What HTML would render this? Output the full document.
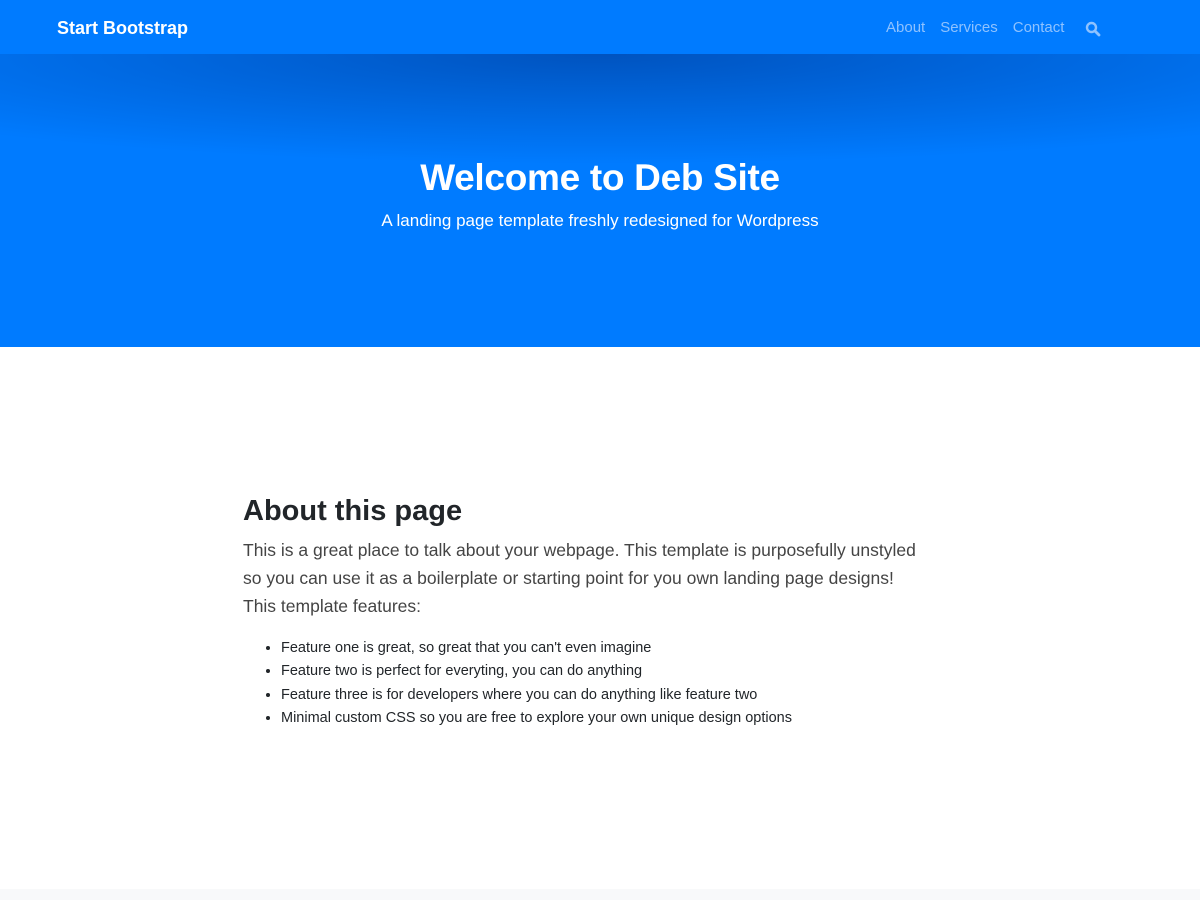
<!DOCTYPE html>
<html><head><style>
*{margin:0;padding:0;box-sizing:border-box}
body{width:1200px;height:900px;overflow:hidden;font-family:"Liberation Sans",sans-serif;background:#fff;position:relative}
nav{height:54px;background:#007bff;position:relative}
.brand{position:absolute;left:57px;top:18px;color:#fff;font-size:18px;font-weight:bold}
.links{position:absolute;left:886px;top:19px;color:#8ec2ff;font-size:15px;display:flex;gap:15px}
.hero{height:293px;background:radial-gradient(ellipse 900px 110px at 600px 0,rgba(0,70,170,.75),rgba(0,123,255,0) 100%),#007bff;text-align:center;color:#fff}
.hero h1{padding-top:103px;font-size:37px;font-weight:bold;letter-spacing:-0.3px}
.hero p{margin-top:12px;font-size:17px}
.about{position:absolute;left:243px;top:495px;width:720px;color:#212529}
.about h2{font-size:29px;font-weight:bold;margin-bottom:8px}
.about p{font-size:17.5px;line-height:28px;color:#444;width:720px}
.about ul{margin-top:17px;margin-left:38px;font-size:14.5px;line-height:23.3px}
footer{position:absolute;left:0;top:889px;width:1200px;height:11px;background:#f8f9fa}
</style></head><body>
<nav><div class="brand">Start Bootstrap</div>
<div class="links"><span>About</span><span>Services</span><span>Contact</span>
<svg width="16" height="16" viewBox="0 0 16 16" style="margin-left:6px;margin-top:2px"><circle cx="6.5" cy="6.5" r="4.5" stroke="#8ec2ff" stroke-width="2.4" fill="none"/><path d="M10 10l4 4" stroke="#8ec2ff" stroke-width="2.8" stroke-linecap="round"/></svg></div></nav>
<div class="hero"><h1>Welcome to Deb Site</h1><p>A landing page template freshly redesigned for Wordpress</p></div>
<div class="about"><h2>About this page</h2>
<p>This is a great place to talk about your webpage. This template is purposefully unstyled<br>so you can use it as a boilerplate or starting point for you own landing page designs!<br>This template features:</p>
<ul><li>Feature one is great, so great that you can't even imagine</li>
<li>Feature two is perfect for everyting, you can do anything</li>
<li>Feature three is for developers where you can do anything like feature two</li>
<li>Minimal custom CSS so you are free to explore your own unique design options</li></ul></div>
<footer></footer>
</body></html>
